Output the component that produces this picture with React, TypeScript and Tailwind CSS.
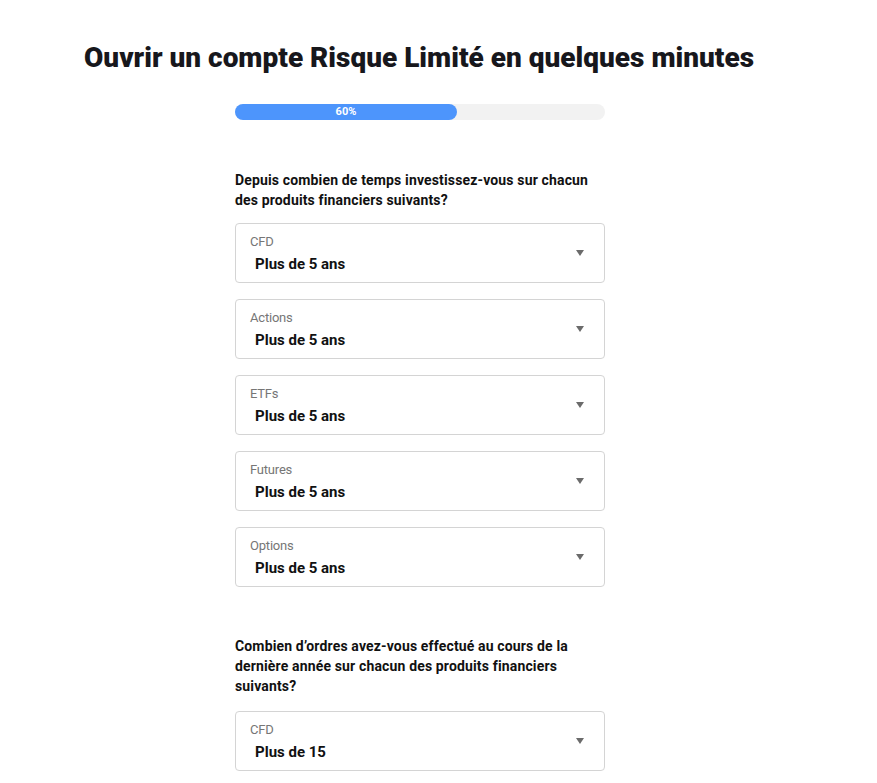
import React from "react"

const FONT = { fontFamily: "Roboto, 'Liberation Sans', sans-serif" }

interface SelectProps {
  label: string
  value: string
}

function SelectBox({ label, value }: SelectProps) {
  return (
    <div className="relative h-[60px] w-[370px] rounded-[4px] border border-[#d4d4d4] bg-white">
      <div className="pl-[14px] pt-[10px]">
        <div className="text-[13px] leading-[16px] text-[#767676] tracking-[-0.2px]">{label}</div>
        <div className="mt-[5px] pl-[5px] text-[15px] font-bold leading-[18px] text-[#111] tracking-[0px]">{value}</div>
      </div>
      <div className="absolute right-[20px] top-[26px] h-0 w-0 border-l-[4px] border-r-[4px] border-t-[6px] border-l-transparent border-r-transparent border-t-[#6b6b6b]" />
    </div>
  )
}

export default function App() {
  const first = ["CFD", "Actions", "ETFs", "Futures", "Options"]

  return (
    <div className="min-h-[783px] w-[877px] bg-white" style={FONT}>
      <h1 className="pl-[84px] pt-[40px] text-[28px] font-black leading-[36px] tracking-[0px] text-[#17171c]">
        Ouvrir un compte Risque Limité en quelques minutes
      </h1>

      <div className="ml-[235px] w-[370px]">
        <div className="mt-[28px] h-[16px] w-full rounded-full bg-[#f2f2f2]">
          <div className="flex h-full w-[60%] items-center justify-center rounded-full bg-[#4d95fc] text-[11px] font-bold text-white">
            60%
          </div>
        </div>

        <p className="mt-[50px] text-[14px] font-bold leading-[20px] tracking-[0.15px] text-[#111]">
          Depuis combien de temps investissez-vous sur chacun des produits financiers suivants?
        </p>

        <div className="mt-[13px] flex flex-col gap-[16px]">
          {first.map((l) => (
            <SelectBox key={l} label={l} value="Plus de 5 ans" />
          ))}
        </div>

        <p className="mt-[49px] text-[14px] font-bold leading-[20px] tracking-[0.15px] text-[#111]">
          Combien d’ordres avez-vous effectué au cours de la dernière année sur chacun des produits financiers suivants?
        </p>

        <div className="mt-[15px] flex flex-col gap-[16px]">
          <SelectBox label="CFD" value="Plus de 15" />
        </div>
      </div>
    </div>
  )
}
